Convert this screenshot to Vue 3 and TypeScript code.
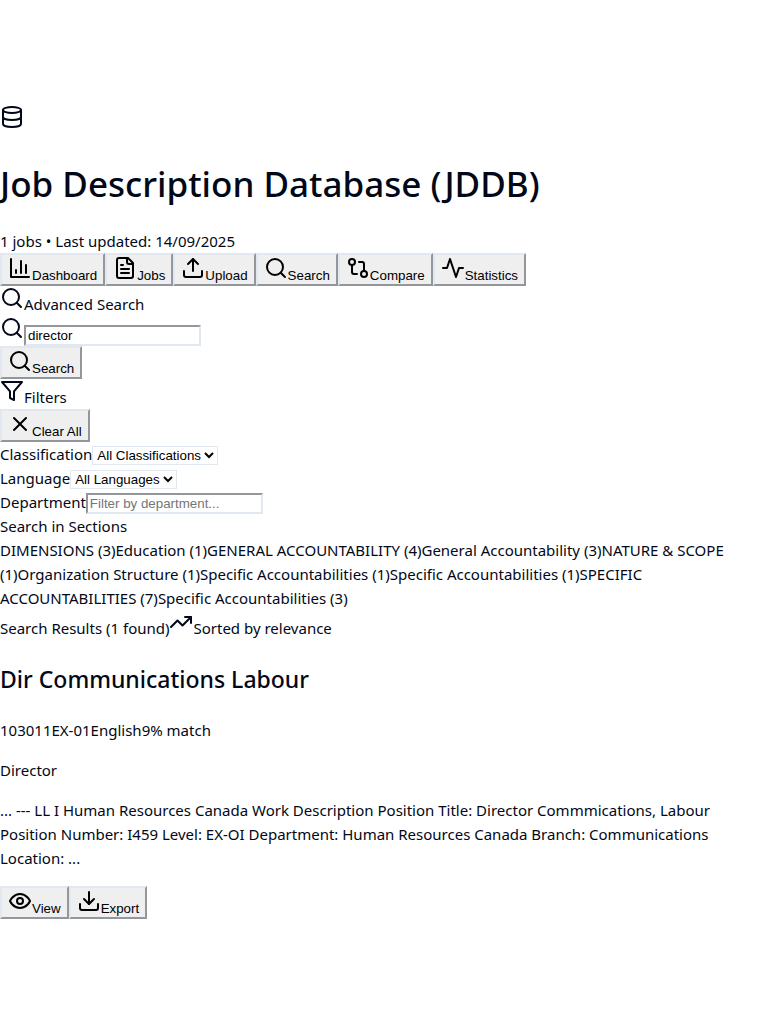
<script setup lang="ts">
import { computed, h, ref, type FunctionalComponent } from 'vue'

const iconPaths = {
  database: ['M3 5v14a9 3 0 0 0 18 0V5', 'M3 12a9 3 0 0 0 18 0', 'M3 5a9 3 0 1 0 18 0a9 3 0 1 0-18 0'],
  chart: ['M3 3v18h18', 'M18 17V9', 'M13 17V5', 'M8 17v-3'],
  file: [
    'M15 2H6a2 2 0 0 0-2 2v16a2 2 0 0 0 2 2h12a2 2 0 0 0 2-2V7Z',
    'M14 2v4a2 2 0 0 0 2 2h4',
    'M10 9H8',
    'M16 13H8',
    'M16 17H8',
  ],
  upload: ['M21 15v4a2 2 0 0 1-2 2H5a2 2 0 0 1-2-2v-4', 'M17 8l-5-5-5 5', 'M12 3v12'],
  search: ['M3 11a8 8 0 1 0 16 0a8 8 0 1 0-16 0', 'M21 21l-4.3-4.3'],
  compare: [
    'M15 18a3 3 0 1 0 6 0a3 3 0 1 0-6 0',
    'M3 6a3 3 0 1 0 6 0a3 3 0 1 0-6 0',
    'M13 6h3a2 2 0 0 1 2 2v7',
    'M11 18H8a2 2 0 0 1-2-2V9',
  ],
  activity: ['M22 12h-4l-3 9L9 3l-3 9H2'],
  filter: ['M22 3H2l8 9.46V19l4 2v-8.54L22 3Z'],
  close: ['M18 6L6 18', 'M6 6l12 12'],
  trending: ['M22 7l-8.5 8.5-5-5L2 17', 'M16 7h6v6'],
  eye: ['M2 12s3-7 10-7 10 7 10 7-3 7-10 7-10-7-10-7Z', 'M9 12a3 3 0 1 0 6 0a3 3 0 1 0-6 0'],
  download: ['M21 15v4a2 2 0 0 1-2 2H5a2 2 0 0 1-2-2v-4', 'M7 10l5 5 5-5', 'M12 15V3'],
}

type IconName = keyof typeof iconPaths

const Icon: FunctionalComponent<{ name: IconName }> = (props) =>
  h(
    'svg',
    {
      width: 24,
      height: 24,
      viewBox: '0 0 24 24',
      fill: 'none',
      stroke: 'currentColor',
      'stroke-width': 2,
      'stroke-linecap': 'round',
      'stroke-linejoin': 'round',
      'aria-hidden': 'true',
    },
    iconPaths[props.name].map((d) => h('path', { d })),
  )
Icon.props = ['name']

const tabs: { icon: IconName; label: string }[] = [
  { icon: 'chart', label: 'Dashboard' },
  { icon: 'file', label: 'Jobs' },
  { icon: 'upload', label: 'Upload' },
  { icon: 'search', label: 'Search' },
  { icon: 'compare', label: 'Compare' },
  { icon: 'activity', label: 'Statistics' },
]

const sections = [
  { name: 'DIMENSIONS', count: 3 },
  { name: 'Education', count: 1 },
  { name: 'GENERAL ACCOUNTABILITY', count: 4 },
  { name: 'General Accountability', count: 3 },
  { name: 'NATURE & SCOPE', count: 1 },
  { name: 'Organization Structure', count: 1 },
  { name: 'Specific Accountabilities', count: 1 },
  { name: 'Specific Accountabilities', count: 1 },
  { name: 'SPECIFIC ACCOUNTABILITIES', count: 7 },
  { name: 'Specific Accountabilities', count: 3 },
]

const results = [
  {
    title: 'Dir Communications Labour',
    tags: ['103011', 'EX-01', 'English', '9% match'],
    role: 'Director',
    excerpt:
      '... --- LL I Human Resources Canada Work Description Position Title: Director Commmications, Labour Position Number: I459 Level: EX-OI Department: Human Resources Canada Branch: Communications Location: ...',
  },
]

const query = ref('director')
const classification = ref('')
const language = ref('')
const department = ref('')
const resultCount = computed(() => results.length)

function clearAll() {
  query.value = ''
  classification.value = ''
  language.value = ''
  department.value = ''
}
</script>

<template>
  <div class="page">
    <header>
      <div><Icon name="database" /></div>
      <h1>Job Description Database (JDDB)</h1>
      <div>1 jobs • Last updated: 14/09/2025</div>
    </header>
    <nav class="buttons">
      <button v-for="tab in tabs" :key="tab.label" type="button"><Icon :name="tab.icon" />{{ tab.label }}</button>
    </nav>
    <main>
      <div><Icon name="search" />Advanced Search</div>
      <form @submit.prevent>
        <div><Icon name="search" /><input v-model="query" type="text" aria-label="Search job descriptions" /></div>
        <div class="buttons"><button type="submit"><Icon name="search" />Search</button></div>
      </form>
      <div><Icon name="filter" />Filters</div>
      <div class="buttons"><button type="button" @click="clearAll"><Icon name="close" />Clear All</button></div>
      <div class="field">
        <label for="classification">Classification</label>
        <select id="classification" v-model="classification"><option value="">All Classifications</option></select>
      </div>
      <div class="field">
        <label for="language">Language</label>
        <select id="language" v-model="language"><option value="">All Languages</option></select>
      </div>
      <div class="field">
        <label for="department">Department</label>
        <input id="department" v-model="department" type="text" placeholder="Filter by department..." />
      </div>
      <div>Search in Sections</div>
      <div><template v-for="section in sections">{{ section.name }} ({{ section.count }})</template></div>
      <div>
        <span>Search Results ({{ resultCount }} found)</span><Icon name="trending" /><span>Sorted by relevance</span>
      </div>
      <article v-for="result in results" :key="result.title">
        <h3>{{ result.title }}</h3>
        <div><span v-for="tag in result.tags" :key="tag">{{ tag }}</span></div>
        <p>{{ result.role }}</p>
        <p class="excerpt">{{ result.excerpt }}</p>
        <div class="buttons">
          <button type="button"><Icon name="eye" />View</button>
          <button type="button"><Icon name="download" />Export</button>
        </div>
      </article>
    </main>
  </div>
</template>

<style>
body {
  margin: 0;
  background: #ffffff;
}
</style>

<style scoped>
.page {
  padding-top: 105px;
  color: #020817;
  font-family: 'Segoe UI', 'Noto Sans', 'Open Sans', sans-serif;
  font-size: 15px;
  line-height: 24px;
}

h1 {
  margin: 24px 0 20px;
  font-size: 35px;
  font-weight: 500;
  line-height: 50px;
}

h3 {
  margin: 24px 0;
  font-size: 23px;
  font-weight: 500;
  line-height: 30px;
}

p {
  margin: 16px 0;
}

.excerpt {
  padding-right: 20px;
}

.buttons {
  display: flex;
  flex-wrap: wrap;
}

.field {
  display: flex;
  align-items: flex-end;
}

button,
input,
select {
  border-color: #e2e8f0;
  font-family: 'Liberation Sans', Arial, sans-serif;
}

button {
  padding: 1px 6px;
  background: #efefef;
  color: #000000;
}

input,
select {
  background: #ffffff;
  color: #000000;
}

input {
  box-sizing: border-box;
  width: 177px;
}

select {
  margin-bottom: 1px;
  border-radius: 0;
}
</style>
